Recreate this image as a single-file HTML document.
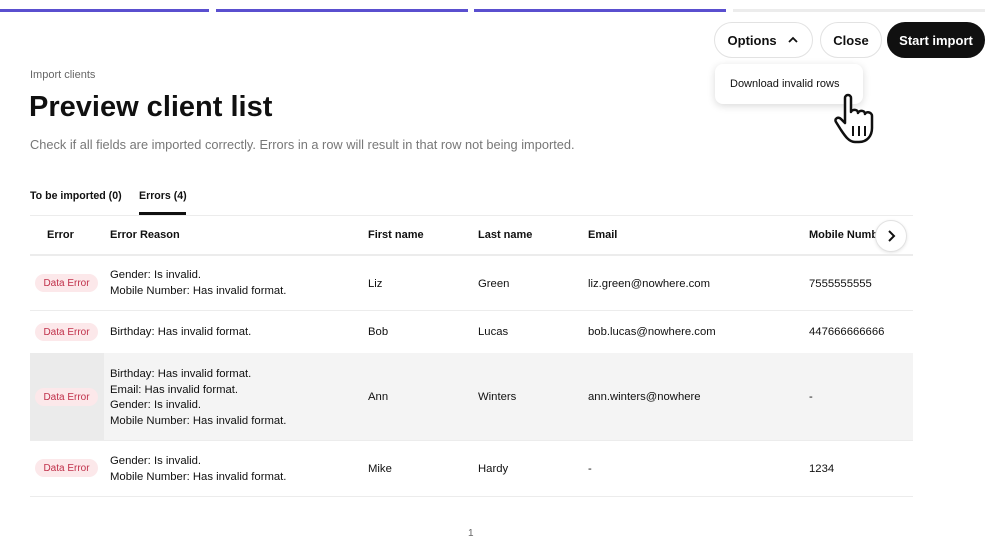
<!DOCTYPE html>
<html><head><style>
*{margin:0;padding:0;box-sizing:border-box}
body{width:1000px;height:556px;background:#fff;font-family:"Liberation Sans",sans-serif;color:#101010;position:relative;overflow:hidden}
.a{position:absolute;white-space:nowrap}
.bar{position:absolute;top:9px;height:3px}
.btn{position:absolute;top:22px;height:36px;border:1px solid #e2e2e2;border-radius:18px;font-size:13px;font-weight:bold;display:flex;align-items:center;justify-content:center}
.h{font-size:11px;font-weight:bold}
.badge{position:absolute;left:35px;width:63px;height:18px;border-radius:9px;background:#fce8ea;color:#c0304a;font-size:10px;display:flex;align-items:center;justify-content:center}
.line{position:absolute;left:30px;width:883px;height:1px;background:#ececec}
.r{position:absolute;font-size:11.3px;line-height:15.5px;white-space:nowrap}
</style></head><body>
<div class="bar" style="left:0;width:209px;background:#5a4fcf"></div>
<div class="bar" style="left:216px;width:252px;background:#5a4fcf"></div>
<div class="bar" style="left:474px;width:252px;background:#5a4fcf"></div>
<div class="bar" style="left:733px;width:252px;background:#ececec"></div>

<div class="btn" style="left:714px;width:99px">Options&nbsp;&nbsp;&nbsp;<svg width="12" height="8" viewBox="0 0 12 8"><path d="M2 6 L6 2 L10 6" stroke="#101010" stroke-width="1.8" fill="none"/></svg></div>
<div class="btn" style="left:820px;width:62px">Close</div>
<div class="btn" style="left:887px;width:98px;background:#101010;color:#fff;border-color:#101010">Start import</div>

<div class="a" style="left:715px;top:64px;width:148px;height:40px;border-radius:8px;background:#fff;box-shadow:0 2px 8px rgba(0,0,0,.15);font-size:11px;padding:14px 0 0 15px">Download invalid rows</div>
<svg class="a" style="left:833px;top:92px" width="54" height="54" viewBox="0 0 54 54"><path d="M12 6 C12 2 18 2 18 6 L18 20 C19 17 25 17 25 21 C26 18 32 18 32 22 C33 19 39 20 39 24 L39 36 C39 44 34 50 26 50 L22 50 C16 50 12 44 8 38 L3 30 C1 27 5 24 8 27 L12 31 Z" fill="#fff" stroke="#101010" stroke-width="2.5" stroke-linejoin="round"/><path d="M20 34 V44 M26 34 V44 M32 34 V44" stroke="#101010" stroke-width="2"/></svg>

<div class="a" style="left:30px;top:69px;font-size:11px;color:#666">Import clients</div>
<div class="a" style="left:29px;top:91px;font-size:29px;font-weight:bold">Preview client list</div>
<div class="a" style="left:30px;top:137px;font-size:12.8px;color:#777">Check if all fields are imported correctly. Errors in a row will result in that row not being imported.</div>

<div class="a h" style="left:30px;top:190px;font-size:10.6px">To be imported (0)</div>
<div class="a h" style="left:139px;top:190px;font-size:10.6px">Errors (4)</div>
<div class="a" style="left:139px;top:212px;width:47px;height:3px;background:#101010"></div>
<div class="line" style="top:215px"></div>

<div class="a h" style="left:47px;top:229px">Error</div>
<div class="a h" style="left:110px;top:229px">Error Reason</div>
<div class="a h" style="left:368px;top:229px">First name</div>
<div class="a h" style="left:478px;top:229px">Last name</div>
<div class="a h" style="left:588px;top:229px">Email</div>
<div class="a h" style="left:809px;top:229px">Mobile Numb</div>
<div class="a" style="left:875px;top:220px;width:32px;height:32px;border-radius:16px;background:#fff;border:1px solid #e2e2e2;box-shadow:0 1px 3px rgba(0,0,0,.1)"><svg width="30" height="30" viewBox="0 0 30 30"><path d="M13 10 L18 15 L13 20" stroke="#101010" stroke-width="2" fill="none"/></svg></div>
<div class="line" style="top:254px;height:2px"></div>

<div class="badge" style="top:274px">Data Error</div>
<div class="r" style="left:110px;top:268px">Gender: Is invalid.<br>Mobile Number: Has invalid format.</div>
<div class="r" style="left:368px;top:277px">Liz</div><div class="r" style="left:478px;top:277px">Green</div>
<div class="r" style="left:588px;top:277px">liz.green@nowhere.com</div><div class="r" style="left:809px;top:277px">7555555555</div>
<div class="line" style="top:310px"></div>

<div class="badge" style="top:323px">Data Error</div>
<div class="r" style="left:110px;top:325px">Birthday: Has invalid format.</div>
<div class="r" style="left:368px;top:325px">Bob</div><div class="r" style="left:478px;top:325px">Lucas</div>
<div class="r" style="left:588px;top:325px">bob.lucas@nowhere.com</div><div class="r" style="left:809px;top:325px">447666666666</div>

<div class="a" style="left:30px;top:353px;width:883px;height:87px;background:#f4f4f4"></div>
<div class="a" style="left:30px;top:353px;width:74px;height:87px;background:#ebebeb"></div>
<div class="badge" style="top:388px">Data Error</div>
<div class="r" style="left:110px;top:367px">Birthday: Has invalid format.<br>Email: Has invalid format.<br>Gender: Is invalid.<br>Mobile Number: Has invalid format.</div>
<div class="r" style="left:368px;top:390px">Ann</div><div class="r" style="left:478px;top:390px">Winters</div>
<div class="r" style="left:588px;top:390px">ann.winters@nowhere</div><div class="r" style="left:809px;top:390px">-</div>
<div class="line" style="top:440px"></div>

<div class="badge" style="top:459px">Data Error</div>
<div class="r" style="left:110px;top:454px">Gender: Is invalid.<br>Mobile Number: Has invalid format.</div>
<div class="r" style="left:368px;top:462px">Mike</div><div class="r" style="left:478px;top:462px">Hardy</div>
<div class="r" style="left:588px;top:462px">-</div><div class="r" style="left:809px;top:462px">1234</div>
<div class="line" style="top:496px"></div>

<div class="a" style="left:468px;top:528px;font-size:10px;color:#666">1</div>
</body></html>
